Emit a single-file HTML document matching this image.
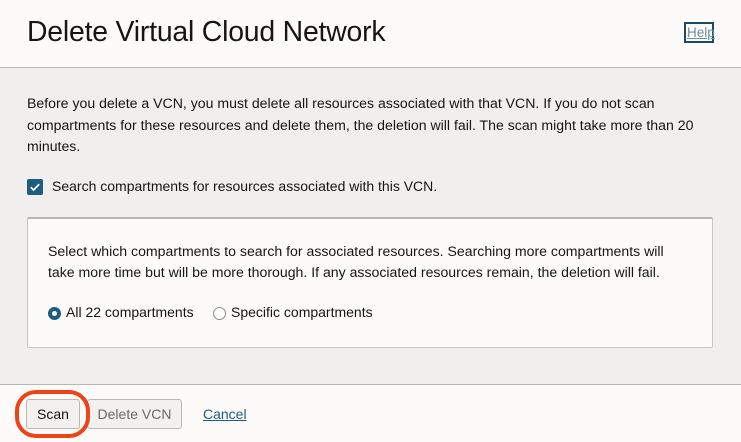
<!DOCTYPE html>
<html><head><style>
body{margin:0;width:741px;height:442px;overflow:hidden;font-family:"Liberation Sans",sans-serif;background:#fcfbfa;color:#161513;position:relative}
.hdr{position:absolute;left:0;top:0;width:741px;height:67px;background:#fcfbfa;border-bottom:1px solid #b9b6b2}
.hdr h1{position:absolute;left:27px;top:16px;margin:0;font-weight:normal;font-size:28.4px;letter-spacing:-0.2px}
.help{position:absolute;left:684px;top:22px;width:30px;height:21px;border:2px solid #1f4a63;box-sizing:border-box;font-size:13.5px;color:#6b8ea6;text-decoration:underline;line-height:17px;padding-left:1px}
.body{position:absolute;left:0;top:68px;width:741px;height:316px;background:#f1efed;border-bottom:1px solid #b9b6b2}
.p{position:absolute;left:27px;top:25px;width:690px;font-size:14.1px;line-height:21.5px}
.cb{position:absolute;left:27px;top:111px;width:16px;height:16px;background:#1f5c82;border-radius:2px}
.cbl{position:absolute;left:52px;top:110px;font-size:14px}
.panel{position:absolute;left:27px;top:149px;width:686px;height:131px;background:#fcfbfa;border:1px solid #c9c6c2;border-top:2px solid #b9b6b2;box-sizing:border-box;border-radius:2px}
.pt{position:absolute;left:20px;top:22px;font-size:14.1px;line-height:21px;width:640px}
.r{position:absolute;top:88px;width:13px;height:13px;border-radius:50%;box-sizing:border-box}
.rl{position:absolute;top:85px;font-size:14px}
.btn{position:absolute;top:399px;height:30px;border:1px solid #bcb9b5;border-radius:3px;background:#f3f1ef;font-size:14px;line-height:29px;text-align:center;box-sizing:border-box}
</style></head><body>
<div class="hdr"><h1>Delete Virtual Cloud Network</h1><div class="help">Help</div></div>
<div class="body">
<div class="p">Before you delete a VCN, you must delete all resources associated with that VCN. If you do not scan compartments for these resources and delete them, the deletion will fail. The scan might take more than 20 minutes.</div>
<div class="cb"><svg width="16" height="16" viewBox="0 0 16 16"><path d="M3.8 8.2l2.8 2.8 5.6-5.8" stroke="#fff" stroke-width="1.7" fill="none"/></svg></div>
<div class="cbl">Search compartments for resources associated with this VCN.</div>
<div class="panel">
<div class="pt">Select which compartments to search for associated resources. Searching more compartments will take more time but will be more thorough. If any associated resources remain, the deletion will fail.</div>
<div class="r" style="left:20px;background:#fff;border:4px solid #1f5c82"></div>
<div class="rl" style="left:38px">All 22 compartments</div>
<div class="r" style="left:185px;border:1px solid #8e8b87;background:#fff"></div>
<div class="rl" style="left:203px">Specific compartments</div>
</div>
</div>
<div class="btn" style="left:26px;width:54px;color:#161513">Scan</div>
<div class="btn" style="left:87px;width:95px;color:#6b6865">Delete VCN</div>
<div style="position:absolute;left:203px;top:406px;font-size:14px;color:#1f5c82;text-decoration:underline">Cancel</div>
<div style="position:absolute;left:15px;top:390px;width:75px;height:48px;border:4.5px solid #ee4316;border-radius:21px;box-sizing:border-box"></div>
</body></html>
